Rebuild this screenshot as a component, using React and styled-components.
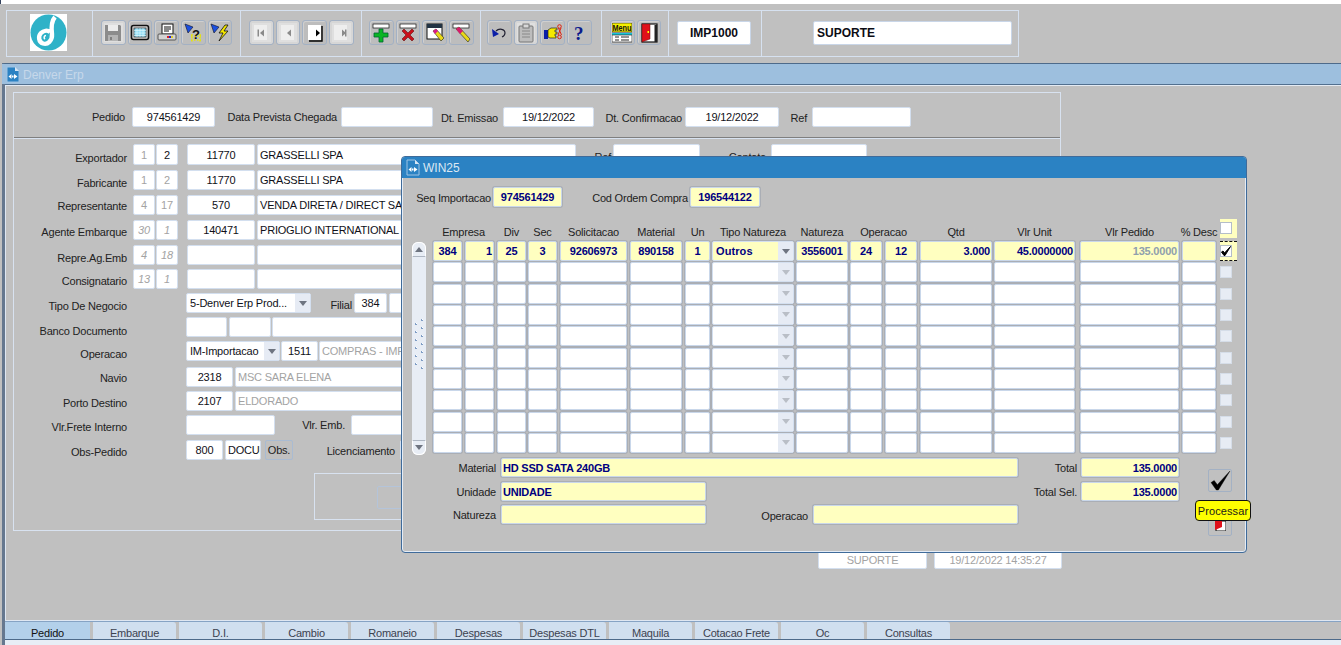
import React from "react";
import styled, { createGlobalStyle } from "styled-components";

const GlobalStyle = createGlobalStyle`
  html, body {
    margin: 0;
    padding: 0;
    background: #c0c0c0;
    overflow: hidden;
  }
  * {
    box-sizing: border-box;
  }
`;

const Page = styled.div`
  position: relative;
  width: 1341px;
  height: 645px;
  display: flex;
  flex-direction: column;
  overflow: hidden;
  background: #c0c0c0;
  color: #1c1c1c;
  font-family: "Liberation Sans", Arial, sans-serif;
  font-size: 11px;
  letter-spacing: -0.2px;
`;

const TopStrip = styled.div`
  height: 4px;
  background: #fff;
  border-left: 1px solid #33415c;
`;

/* toolbar */
const Toolbar = styled.div`
  display: flex;
  width: 1013px;
  height: 47px;
  margin: 6px 0 0 6px;
  border: 1px solid #d6e1f0;
  letter-spacing: 0;
`;

const ToolGroup = styled.div`
  display: flex;
  align-items: center;
  gap: 2.2px;
  width: ${(p) => p.$w}px;
  padding-left: ${(p) => p.$pad}px;
  padding-bottom: 2px;
  border-right: 1px solid #d6e1f0;
  &:last-child {
    border-right: none;
  }
`;

const LogoBox = styled.div`
  width: 37px;
  height: 37px;
  background: #fff;
`;

const ToolButton = styled.div`
  display: flex;
  align-items: center;
  justify-content: center;
  width: 24.5px;
  height: 25px;
  border: 1px solid #a3b1c4;
  border-radius: 3px;
  background: #bdbdbd;
  box-shadow: inset 1px 1px 0 #cfcfcf;
  ${(p) => p.$off && "box-shadow: inset 0 0 0 2px #d6d6d6, inset 0 0 0 6px #dfdfdf;"}
`;

const ToolField = styled.div`
  display: flex;
  align-items: center;
  justify-content: ${(p) => (p.$left ? "flex-start" : "center")};
  width: ${(p) => p.$w}px;
  height: 24px;
  padding: 0 3px;
  background: #fff;
  border: 1px solid #c9d6e8;
  border-radius: 2px;
  color: #0c0c14;
  font-size: 12px;
  font-weight: 700;
`;

/* main window */
const MainWindow = styled.div`
  flex: 1;
  display: flex;
  flex-direction: column;
  min-height: 0;
  margin: 6px 0 0 2px;
  border-top: 1px solid #4d6a8a;
  border-left: 3px solid #66788f;
  box-shadow: inset 1px 0 0 #dfe7f2;
`;

const MainTitle = styled.div`
  display: flex;
  align-items: center;
  gap: 3px;
  height: 20px;
  margin-left: -3px;
  padding: 1px 0 0 4px;
  background: #9dbfde;
  color: #c6d8ea;
  font-size: 12px;
  letter-spacing: 0;
`;

const MainBody = styled.div`
  flex: 1;
  display: flex;
  flex-direction: column;
  min-height: 0;
  padding-top: 7px;
  border-top: 1px solid #52708f;
  box-shadow: inset 0 1px 0 #e4ebf4;
`;

const Frame = styled.div`
  width: 1048px;
  height: 439px;
  margin-left: 8px;
  border: 1px solid #d8e2f0;
`;

const HeaderRow = styled.div`
  display: flex;
  height: 45px;
  padding: 14px 0 10px;
  border-bottom: 1px solid #7f7f7f;
  box-shadow: 0 1px 0 #d8e2f0;
`;

const FormRow = styled.div`
  display: flex;
  height: ${(p) => p.$h || 20}px;
  margin-top: ${(p) => p.$mt}px;
`;

const Label = styled.div`
  flex: none;
  display: flex;
  align-items: center;
  justify-content: flex-end;
  width: ${(p) => p.$w}px;
  height: 100%;
  margin-left: ${(p) => p.$ml || 0}px;
  padding-top: ${(p) => p.$dy ?? 4}px;
  color: #222;
  font-size: 11px;
  white-space: nowrap;
`;

const Field = styled.div`
  flex: none;
  display: flex;
  align-items: center;
  justify-content: ${(p) =>
    p.$align === "center" ? "center" : p.$align === "right" ? "flex-end" : "flex-start"};
  width: ${(p) => p.$w}px;
  height: 100%;
  margin-left: ${(p) => p.$ml || 0}px;
  padding: 0 2px;
  overflow: hidden;
  background: #fff;
  border: 1px solid #d3dfef;
  border-radius: 2px;
  color: ${(p) => (p.$muted ? "#a3a3a3" : "#101018")};
  font-size: 11px;
  font-style: ${(p) => (p.$slant ? "italic" : "normal")};
  white-space: nowrap;
`;

const ObsButton = styled.div`
  display: flex;
  align-items: center;
  justify-content: center;
  width: 28px;
  height: 100%;
  margin-left: 4px;
  border: 1px solid #a9bbd2;
  border-radius: 2px;
  color: #222;
`;

const Combo = styled.div`
  flex: none;
  display: flex;
  align-items: stretch;
  width: ${(p) => p.$w}px;
  height: 100%;
  margin-left: ${(p) => p.$ml || 0}px;
  overflow: hidden;
  background: ${(p) => (p.$yellow ? "#ffffc0" : "#fff")};
  border: 1px solid #d3dfef;
  border-radius: 2px;
  ${(p) => p.$grid && "box-shadow: 0 0 0 1px #aaaeb5;"}
  color: ${(p) => (p.$yellow ? "#000080" : "#101018")};
  font-weight: ${(p) => (p.$yellow ? 700 : 400)};
  letter-spacing: ${(p) => (p.$yellow ? "0.1px" : "-0.2px")};
`;

const ComboText = styled.div`
  flex: 1;
  display: flex;
  align-items: center;
  padding-left: 3px;
  overflow: hidden;
  white-space: nowrap;
`;

const ComboArrow = styled.div`
  flex: none;
  display: flex;
  align-items: center;
  justify-content: center;
  width: 15px;
  background: #e6ebf4;
  &::after {
    content: "";
    border-left: 4px solid transparent;
    border-right: 4px solid transparent;
    border-top: 5px solid ${(p) => (p.$faded ? "#b9bec6" : "#6e7480")};
  }
`;

const LowerBox = styled.div`
  width: 500px;
  height: 47px;
  margin: 13px 0 0 300px;
  padding: 12px 0 0 62px;
  border: 1px solid #d8e2f0;
`;

const GhostButton = styled.div`
  width: 120px;
  height: 23px;
  border: 1px solid #b4c4da;
  border-radius: 2px;
`;

const StatusRow = styled.div`
  display: flex;
  gap: 7px;
  height: 19px;
  margin: 19px 0 0 813px;
`;

/* tabs */
const TabBar = styled.div`
  display: flex;
  margin-top: auto;
  height: 25px;
  padding-top: 2px;
  background: linear-gradient(#dfe7f2 0 1px, #86a3c4 1px 2px, #c0c0c0 2px);
  border-bottom: 5px solid #e8eef6;
  box-shadow: inset 0 -1px 0 #4d6a8a;
`;

const Tab = styled.div`
  display: flex;
  align-items: flex-end;
  justify-content: center;
  width: ${(p) => (p.$active ? 85 : 83)}px;
  height: 17px;
  margin-right: 3px;
  background: ${(p) => (p.$active ? "#b3d0ea" : "#d0dfef")};
  border-top-right-radius: ${(p) => (p.$active ? "0" : "3px")};
  color: ${(p) => (p.$active ? "#111" : "#3c4250")};
  font-size: 11px;
`;

/* WIN25 dialog */
const Dialog = styled.div`
  position: absolute;
  left: 401px;
  top: 156px;
  display: flex;
  flex-direction: column;
  width: 846px;
  height: 397px;
  background: #c0c0c0;
  border: 1px solid #3f6b9a;
  border-radius: 4px;
  box-shadow: inset 0 0 0 1px #e4ecf6;
`;

const DialogTitle = styled.div`
  display: flex;
  align-items: center;
  gap: 3px;
  height: 21px;
  padding-left: 4px;
  background: #2b82c3;
  border-radius: 3px 3px 0 0;
  color: #dce8f3;
  font-size: 12px;
  letter-spacing: 0;
`;

const DialogBody = styled.div`
  flex: 1;
  padding: 9px 0 0 10px;
`;

const SeqRow = styled.div`
  display: flex;
  height: 20px;
`;

const YellowField = styled.div`
  flex: none;
  display: flex;
  align-items: center;
  justify-content: ${(p) =>
    p.$align === "center" ? "center" : p.$align === "right" ? "flex-end" : "flex-start"};
  width: ${(p) => p.$w}px;
  height: ${(p) => p.$h || "100%"};
  margin-left: ${(p) => p.$ml || 0}px;
  padding: 0 1px;
  overflow: hidden;
  background: ${(p) => (p.$blank ? "#fff" : "#ffffc0")};
  border: 1px solid #c9d7ea;
  border-radius: 2px;
  box-shadow: 0 0 0 1px #aaaeb5;
  color: ${(p) => (p.$muted ? "#8fa0ad" : "#000080")};
  font-size: 11px;
  font-weight: 700;
  white-space: nowrap;
`;

const TableArea = styled.div`
  display: flex;
  margin-top: 12px;
`;

const ScrollBar = styled.div`
  display: flex;
  flex-direction: column;
  justify-content: space-between;
  align-items: stretch;
  width: 14px;
  height: 213px;
  margin: 23px 7px 0 0;
  background: #e8edf5;
  border-radius: 6px;
`;

const ScrollEnd = styled.div`
  display: flex;
  align-items: center;
  justify-content: center;
  height: 15px;
  background: #e8edf5;
  border: 1px solid #fff;
  border-radius: ${(p) => (p.$down ? "0 0 6px 6px" : "6px 6px 0 0")};
  ${(p) => (p.$down ? "border-top: 1px solid #aeb6c2;" : "border-bottom: 1px solid #aeb6c2;")}
  &::after {
    content: "";
    border-left: 4px solid transparent;
    border-right: 4px solid transparent;
    ${(p) => (p.$down ? "border-top: 5px solid #6e7480;" : "border-bottom: 5px solid #6e7480;")}
  }
`;

const ScrollGrip = styled.svg`
  margin-bottom: 4px;
`;

const COL_PITCH = [32, 32, 31, 32, 70, 55, 27, 84, 54, 35, 35, 74, 86, 102, 38, 18];
const COL_WIDTH = [29, 29, 29, 29, 67, 52, 25, 82, 52, 32, 32, 72, 81, 99, 34, 17];

const Table = styled.div`
  display: grid;
  grid-template-columns: ${COL_PITCH.map((n) => `${n}px`).join(" ")};
  grid-template-rows: 22px repeat(10, 21.33px);
`;

const HeadCell = styled.div`
  grid-column: span ${(p) => p.$span || 1};
  display: flex;
  align-items: center;
  justify-content: center;
  width: ${(p) => p.$w}px;
  height: 22px;
  padding-top: 4px;
  color: #222;
  white-space: nowrap;
`;

const Cell = styled.div`
  height: 20px;
`;

const CheckCell = styled.div`
  display: flex;
  align-items: ${(p) => (p.$head ? "flex-start" : "center")};
  width: 17px;
  height: ${(p) => (p.$head ? 19 : 20)}px;
  padding-top: ${(p) => (p.$head ? 3 : 0)}px;
  background: ${(p) => (p.$yellow ? "#ffffc0" : "transparent")};
  ${(p) => p.$focus && "border-top: 1px dashed #111; border-bottom: 1px dashed #111;"}
`;

const CheckBox = styled.div`
  display: flex;
  align-items: center;
  justify-content: center;
  width: 12px;
  height: 12px;
  background: ${(p) => (p.$off ? "#e7ecf4" : "#fff")};
  border: 1px solid ${(p) => (p.$off ? "#d5dde8" : "#b4bdc9")};
`;

const BottomArea = styled.div`
  display: flex;
  margin-top: 3px;
`;

const BottomFields = styled.div`
  display: flex;
  flex-direction: column;
  gap: 5px;
  width: 767px;
`;

const BottomRow = styled.div`
  display: flex;
  height: 19px;
  margin-top: ${(p) => p.$mt || 0}px;
`;

const ActionColumn = styled.div`
  position: relative;
  display: flex;
  flex-direction: column;
  gap: 21px;
  margin-left: 29px;
  padding-top: 11px;
`;

const ActionButton = styled.div`
  display: flex;
  align-items: ${(p) => (p.$low ? "flex-end" : "center")};
  justify-content: center;
  width: 24px;
  height: 23px;
  padding-bottom: ${(p) => (p.$low ? 4 : 0)}px;
  border: 1px solid #a3b1c4;
  border-radius: 2px;
`;

const Tooltip = styled.div`
  position: absolute;
  left: -13px;
  top: 42px;
  display: flex;
  align-items: center;
  justify-content: center;
  width: 56px;
  height: 21px;
  background: #ffff00;
  border: 1px solid #111;
  border-radius: 4px;
  color: #1a1a1a;
  font-size: 11px;
  letter-spacing: 0.1px;
`;

/* drawings */
function DocIcon({ fill }) {
  return (
    <svg width="14" height="17" viewBox="0 0 14 17">
      <path d="M1 1h8l4 4v11H1z" fill={fill} stroke="#9fc3e3" strokeWidth="1" />
      <path d="M9 1v4h4z" fill="#d7e6f4" />
      <path d="M5.5 8 2.5 10.5 5.5 13z" fill="#fff" />
      <rect x="6" y="9.5" width="1.5" height="2" fill="#fff" />
      <path d="M8 8l3.5 2.5L8 13z" fill="#fff" />
    </svg>
  );
}

function Logo() {
  return (
    <svg width="37" height="37" viewBox="0 0 37 37">
      <circle cx="18.5" cy="18.5" r="18" fill="#2fb2c8" />
      <path
        d="M25 3 C21.5 7 21 12 22 20 C22.5 27 17.5 31 13 29.5 C8.5 28 8 22 11 19 C13.5 16.5 17.5 16 20 18"
        fill="none"
        stroke="#fff"
        strokeWidth="4.4"
      />
      <path d="M15 25 C13.5 24 14 21.5 16 21.5" fill="none" stroke="#fff" strokeWidth="1.6" />
    </svg>
  );
}

const icons = {
  save: (
    <>
      <path d="M2 2h15l1 1v15H2z" fill="#8c8c8c" />
      <rect x="5" y="2" width="10" height="6" fill="#ececec" />
      <rect x="5" y="12" width="10" height="6" fill="#b4b4b4" />
      <rect x="7" y="14" width="2" height="3" fill="#808080" />
    </>
  ),
  screen: (
    <>
      <rect x="1.5" y="2.5" width="17" height="14" rx="2" fill="#d8d8d8" stroke="#111" strokeWidth="1.6" />
      <rect x="4" y="5" width="12" height="9" fill="#8fdcf5" stroke="#222" strokeWidth="0.7" />
      <path d="M4 7.5h12M4 10h12M4 12.5h12M7 5v9M10 5v9M13 5v9" stroke="#e8fbff" strokeWidth="0.6" />
    </>
  ),
  print: (
    <>
      <rect x="5" y="1" width="11" height="10" fill="#fff" stroke="#111" />
      <path d="M7 4h7M7 6h7M7 8h5" stroke="#111" />
      <rect x="1" y="11" width="18" height="6" rx="1" fill="#d4d4d4" stroke="#555" />
      <rect x="10" y="13" width="2" height="2" fill="#d22" />
      <rect x="12" y="13" width="2" height="2" fill="#22c" />
      <rect x="14" y="13" width="2" height="2" fill="#dc2" />
    </>
  ),
  ask: (
    <>
      <path d="M2 1l8 3-5 6z" fill="#1a4fe0" stroke="#112" strokeWidth="0.6" />
      <path d="M8 13h10M8 17h10M9 11v8M17 11v8" stroke="#e8e800" strokeWidth="1.4" strokeDasharray="1.5 1.5" />
      <text x="9" y="16" fontFamily="Liberation Sans" fontSize="13" fontWeight="700" fill="#111">?</text>
    </>
  ),
  run: (
    <>
      <path d="M1 1l8 3-5 6z" fill="#1a4fe0" stroke="#112" strokeWidth="0.6" />
      <path d="M15 2l-6 8h4l-4 8 9-10h-4l4-6z" fill="#f5e800" stroke="#111" strokeWidth="0.8" />
    </>
  ),
  plus: (
    <>
      <rect x="2" y="1" width="16" height="4" fill="#fff" stroke="#111" strokeWidth="0.7" />
      <path d="M8 6h4v4h5v4h-5v5H8v-5H3v-4h5z" fill="#0bb524" stroke="#063" strokeWidth="0.8" />
    </>
  ),
  cross: (
    <>
      <rect x="2" y="1" width="16" height="4" fill="#fff" stroke="#111" strokeWidth="0.7" />
      <path d="M4 8l2-2 4 4 4-4 2 2-4 4 4 4-2 2-4-4-4 4-2-2 4-4z" fill="#c9101a" stroke="#611" strokeWidth="0.6" />
    </>
  ),
  editWin: (
    <>
      <rect x="2" y="1" width="15" height="15" fill="#fff" stroke="#111" />
      <rect x="2" y="1" width="15" height="4" fill="#234" />
      <path d="M8 8l3-2 8 9-3 3z" fill="#e8d81a" stroke="#222" strokeWidth="0.6" />
      <path d="M8 8l3-2 2 2-3 3z" fill="#d81a8c" />
    </>
  ),
  pencil: (
    <>
      <rect x="2" y="1" width="16" height="4" fill="#fff" stroke="#111" strokeWidth="0.7" />
      <path d="M5 6l3-2 11 12-2 3z" fill="#e8d81a" stroke="#222" strokeWidth="0.6" />
      <path d="M5 6l3-2 4 4-3 3z" fill="#d81a6c" />
    </>
  ),
  undo: (
    <>
      <path d="M7 8c3-3 9-2 9 2 0 2-1 3-3 4" fill="none" stroke="#223" strokeWidth="1.2" />
      <path d="M3 6l1 8 6-3z" fill="#0b1fa8" />
    </>
  ),
  clip: (
    <>
      <rect x="3" y="3" width="14" height="16" rx="1" fill="#bdbdbd" stroke="#777" />
      <rect x="7" y="1" width="6" height="4" fill="#d8d8d8" stroke="#777" />
      <path d="M6 8h8M6 11h8M6 14h8" stroke="#888" />
    </>
  ),
  hand: (
    <>
      <rect x="1" y="7" width="4" height="9" fill="#0b1fa8" />
      <path d="M5 7l3-2h6v2h-2v2h2v2h-2v2h1v2H7l-2-1z" fill="#f5e800" stroke="#222" strokeWidth="0.7" />
      <circle cx="16.5" cy="3.5" r="1.8" fill="none" stroke="#d21" />
      <circle cx="16.5" cy="14" r="1.8" fill="none" stroke="#d21" />
      <path d="M15.5 5l3 7M18 5l-3 7" stroke="#d21" />
    </>
  ),
  help: (
    <text x="5" y="17" fontFamily="Liberation Serif" fontSize="19" fontWeight="700" fill="#0b1a8c">?</text>
  ),
  menu: (
    <>
      <rect x="0" y="0" width="20" height="9" fill="#f5f000" stroke="#111" strokeWidth="0.6" />
      <text x="0.5" y="8" fontFamily="Liberation Sans" fontSize="8.5" fontWeight="700" fill="#111" textLength="19" lengthAdjust="spacingAndGlyphs">Menu</text>
      <rect x="0" y="10" width="20" height="2" fill="#18c5d8" />
      <rect x="0" y="12" width="20" height="7" fill="#fff" stroke="#111" strokeWidth="0.6" />
      <path d="M3 14h4M9 14h8M3 17h4M9 17h8" stroke="#111" strokeWidth="0.9" />
    </>
  ),
  door: (
    <>
      <rect x="3" y="1" width="15" height="18" fill="#fff" stroke="#111" strokeWidth="1.2" />
      <rect x="15.5" y="2" width="2.5" height="17" fill="#222" />
      <path d="M3 1h8v15l-8 3z" fill="#e0101a" stroke="#611" strokeWidth="0.5" />
      <rect x="8.5" y="8" width="1.5" height="2" fill="#ff0" />
    </>
  ),
};

function Glyph({ name }) {
  return (
    <svg width="20" height="20" viewBox="0 0 20 20">
      {icons[name]}
    </svg>
  );
}

function NavGlyph({ dir, bar, off }) {
  const tone = off ? "#8a8a8a" : "#000";
  const tri = dir === "left" ? "M11 5.5v7l-4-3.5z" : "M9 5.5v7l4-3.5z";
  return (
    <svg width="16" height="18" viewBox="0 0 16 18">
      {!off && <path d="M15 2v15H2" fill="none" stroke="#000" strokeWidth="1.4" />}
      <rect x="1" y="1" width="13" height="15" fill={off ? "#eeeeee" : "#fff"} />
      <path d={tri} fill={tone} />
      {bar && <rect x={dir === "left" ? 4.5 : 12} y="5.5" width="1.5" height="7" fill={tone} />}
    </svg>
  );
}

function CheckMark({ size, heavy }) {
  return (
    <svg width={size} height={size} viewBox="0 0 20 20">
      <path
        d="M1 12l3-2 3 4L19 1 8 19H6z"
        fill="#000"
        stroke="#000"
        strokeWidth={heavy ? 2 : 0.4}
      />
    </svg>
  );
}

const GRID_ROWS = [
  ["384", "1", "25", "3", "92606973", "890158", "1", "Outros", "3556001", "24", "12", "3.000", "45.0000000", "135.0000", ""],
  ...Array.from({ length: 9 }, () => Array(15).fill("")),
];

const HEADERS = [
  ["Empresa", 2],
  ["Div", 1],
  ["Sec", 1],
  ["Solicitacao", 1],
  ["Material", 1],
  ["Un", 1],
  ["Tipo Natureza", 1],
  ["Natureza", 1],
  ["Operacao", 2],
  ["Qtd", 1],
  ["Vlr Unit", 1],
  ["Vlr Pedido", 1],
  ["% Desc", 1],
];

const TABS = ["Embarque", "D.I.", "Cambio", "Romaneio", "Despesas", "Despesas DTL", "Maquila", "Cotacao Frete", "Oc", "Consultas"];

function headWidth(start, span) {
  const pitch = COL_PITCH.slice(start, start + span - 1).reduce((a, b) => a + b, 0);
  return pitch + COL_WIDTH[start + span - 1];
}

function cellAlign(c) {
  return c === 1 || c > 10 ? "right" : "center";
}

function SmallPair({ a, b, slantA, slantB, darkB }) {
  return (
    <>
      <Field $w={22} $ml={6} $align="center" $muted $slant={slantA}>{a}</Field>
      <Field $w={22} $ml={1} $align="center" $muted={!darkB} $slant={slantB}>{b}</Field>
    </>
  );
}

export default function App() {
  let col = 0;
  return (
    <Page>
      <GlobalStyle />
      <TopStrip />
      <Toolbar>
        <ToolGroup $w={86} $pad={23}>
          <LogoBox><Logo /></LogoBox>
        </ToolGroup>
        <ToolGroup $w={148} $pad={8}>
          {["save", "screen", "print", "ask", "run"].map((n) => (
            <ToolButton key={n} $off={n === "save"}><Glyph name={n} /></ToolButton>
          ))}
        </ToolGroup>
        <ToolGroup $w={121} $pad={8}>
          <ToolButton $off><NavGlyph dir="left" bar off /></ToolButton>
          <ToolButton $off><NavGlyph dir="left" off /></ToolButton>
          <ToolButton><NavGlyph dir="right" /></ToolButton>
          <ToolButton $off><NavGlyph dir="right" bar off /></ToolButton>
        </ToolGroup>
        <ToolGroup $w={119} $pad={7}>
          {["plus", "cross", "editWin", "pencil"].map((n) => (
            <ToolButton key={n}><Glyph name={n} /></ToolButton>
          ))}
        </ToolGroup>
        <ToolGroup $w={121} $pad={6}>
          {["undo", "clip", "hand", "help"].map((n) => (
            <ToolButton key={n} $off={n === "clip"}><Glyph name={n} /></ToolButton>
          ))}
        </ToolGroup>
        <ToolGroup $w={67} $pad={8}>
          <ToolButton><Glyph name="menu" /></ToolButton>
          <ToolButton><Glyph name="door" /></ToolButton>
        </ToolGroup>
        <ToolGroup $w={93} $pad={8}>
          <ToolField $w={74}>IMP1000</ToolField>
        </ToolGroup>
        <ToolGroup $w={255} $pad={51}>
          <ToolField $w={199} $left>SUPORTE</ToolField>
        </ToolGroup>
      </Toolbar>

      <MainWindow>
        <MainTitle>
          <DocIcon fill="#2b82c3" />
          Denver Erp
        </MainTitle>
        <MainBody>
          <Frame>
            <HeaderRow>
              <Label $w={111} $dy={0}>Pedido</Label>
              <Field $w={83} $ml={7} $align="center">974561429</Field>
              <Label $w={110} $ml={12} $dy={0}>Data Prevista Chegada</Label>
              <Field $w={92} $ml={4} />
              <Label $w={56} $ml={9} $dy={2}>Dt. Emissao</Label>
              <Field $w={91} $ml={5} $align="center">19/12/2022</Field>
              <Label $w={77} $ml={11} $dy={2}>Dt. Confirmacao</Label>
              <Field $w={94} $ml={3} $align="center">19/12/2022</Field>
              <Label $w={17} $ml={11} $dy={2}>Ref</Label>
              <Field $w={99} $ml={5} />
            </HeaderRow>

            <FormRow $mt={6} $h={21}>
              <Label $w={113} $dy={7}>Exportador</Label>
              <SmallPair a="1" b="2" darkB />
              <Field $w={68} $ml={9} $align="center">11770</Field>
              <Field $w={319} $ml={2}>GRASSELLI SPA</Field>
              <Label $w={18} $ml={17} $dy={4}>Ref</Label>
              <Field $w={87} $ml={2} />
              <Label $w={36} $ml={30} $dy={4}>Contato</Label>
              <Field $w={96} $ml={5} />
            </FormRow>
            <FormRow $mt={5}>
              <Label $w={113} $dy={6}>Fabricante</Label>
              <SmallPair a="1" b="2" />
              <Field $w={68} $ml={9} $align="center">11770</Field>
              <Field $w={319} $ml={2}>GRASSELLI SPA</Field>
            </FormRow>
            <FormRow $mt={5}>
              <Label $w={113} $dy={2}>Representante</Label>
              <SmallPair a="4" b="17" />
              <Field $w={68} $ml={9} $align="center">570</Field>
              <Field $w={319} $ml={2}>VENDA DIRETA / DIRECT SALES</Field>
            </FormRow>
            <FormRow $mt={5}>
              <Label $w={113} $dy={3}>Agente Embarque</Label>
              <SmallPair a="30" b="1" slantA slantB />
              <Field $w={68} $ml={9} $align="center">140471</Field>
              <Field $w={319} $ml={2}>PRIOGLIO INTERNATIONAL SPA</Field>
            </FormRow>
            <FormRow $mt={5}>
              <Label $w={113} $dy={5}>Repre.Ag.Emb</Label>
              <SmallPair a="4" b="18" slantA slantB />
              <Field $w={68} $ml={9} />
              <Field $w={319} $ml={2} />
            </FormRow>
            <FormRow $mt={4}>
              <Label $w={113} $dy={3}>Consignatario</Label>
              <SmallPair a="13" b="1" slantA slantB />
              <Field $w={68} $ml={9} />
              <Field $w={319} $ml={2} />
            </FormRow>
            <FormRow $mt={4}>
              <Label $w={113} $dy={6}>Tipo De Negocio</Label>
              <Combo $w={125} $ml={59}>
                <ComboText>5-Denver Erp Prod...</ComboText>
                <ComboArrow />
              </Combo>
              <Label $w={21} $ml={20} $dy={4}>Filial</Label>
              <Field $w={33} $ml={2} $align="center">384</Field>
              <Field $w={60} $ml={2} />
            </FormRow>
            <FormRow $mt={4}>
              <Label $w={113} $dy={8}>Banco Documento</Label>
              <Field $w={41} $ml={59} />
              <Field $w={42} $ml={2} />
              <Field $w={200} $ml={1} />
            </FormRow>
            <FormRow $mt={4}>
              <Label $w={113} $dy={6}>Operacao</Label>
              <Combo $w={94} $ml={59}>
                <ComboText>IM-Importacao</ComboText>
                <ComboArrow />
              </Combo>
              <Field $w={37} $ml={1} $align="center">1511</Field>
              <Field $w={200} $ml={1} $muted>COMPRAS - IMPORTACAO</Field>
            </FormRow>
            <FormRow $mt={6}>
              <Label $w={113} $dy={1}>Navio</Label>
              <Field $w={47} $ml={59} $align="center">2318</Field>
              <Field $w={300} $ml={2} $muted>MSC SARA ELENA</Field>
            </FormRow>
            <FormRow $mt={4}>
              <Label $w={113} $dy={4}>Porto Destino</Label>
              <Field $w={47} $ml={59} $align="center">2107</Field>
              <Field $w={300} $ml={2} $muted>ELDORADO</Field>
            </FormRow>
            <FormRow $mt={4}>
              <Label $w={113} $dy={4}>Vlr.Frete Interno</Label>
              <Field $w={89} $ml={59} />
              <Label $w={43} $ml={27} $dy={0}>Vlr. Emb.</Label>
              <Field $w={100} $ml={6} />
            </FormRow>
            <FormRow $mt={5}>
              <Label $w={113} $dy={3}>Obs-Pedido</Label>
              <Field $w={37} $ml={59} $align="center">800</Field>
              <Field $w={36} $ml={2}>DOCUM</Field>
              <ObsButton>Obs.</ObsButton>
              <Label $w={69} $ml={33} $dy={1}>Licenciamento</Label>
              <Field $w={60} $ml={5} />
            </FormRow>
            <LowerBox>
              <GhostButton />
            </LowerBox>
          </Frame>

          <StatusRow>
            <Field $w={109} $align="center" $muted>SUPORTE</Field>
            <Field $w={128} $align="center" $muted>19/12/2022 14:35:27</Field>
          </StatusRow>

          <TabBar>
            <Tab $active>Pedido</Tab>
            {TABS.map((t) => (
              <Tab key={t}>{t}</Tab>
            ))}
          </TabBar>
        </MainBody>
      </MainWindow>

      <Dialog>
        <DialogTitle>
          <DocIcon fill="#2b82c3" />
          WIN25
        </DialogTitle>
        <DialogBody>
          <SeqRow>
            <Label $w={79} $dy={1}>Seq Importacao</Label>
            <YellowField $w={69} $ml={2} $align="center">974561429</YellowField>
            <Label $w={94} $ml={32} $dy={1}>Cod Ordem Compra</Label>
            <YellowField $w={70} $ml={2} $align="center">196544122</YellowField>
          </SeqRow>

          <TableArea>
            <ScrollBar>
              <ScrollEnd />
              <ScrollGrip width="14" height="56" viewBox="0 0 14 56">
                {[0, 8, 16, 24, 32, 40, 48].map((y) => (
                  <g key={y}>
                    <rect x="9" y={y} width="2" height="2" fill="#7e9cc4" />
                    <rect x="10" y={y} width="1" height="1" fill="#fff" />
                    {y < 48 && <rect x="3" y={y + 4} width="2" height="2" fill="#7e9cc4" />}
                    {y < 48 && <rect x="4" y={y + 4} width="1" height="1" fill="#fff" />}
                  </g>
                ))}
              </ScrollGrip>
              <ScrollEnd $down />
            </ScrollBar>

            <Table>
              {HEADERS.map(([text, span]) => {
                const start = col;
                col += span;
                return <HeadCell key={text} $span={span} $w={headWidth(start, span)}>{text}</HeadCell>;
              })}
              <CheckCell $head $yellow>
                <CheckBox />
              </CheckCell>

              {GRID_ROWS.flatMap((row, r) => [
                ...row.map((value, c) => (
                  <Cell key={`${r}-${c}`}>
                    {c === 7 ? (
                      <Combo $w={COL_WIDTH[c]} $grid $yellow={r === 0}>
                        <ComboText>{value}</ComboText>
                        <ComboArrow $faded={r > 0} />
                      </Combo>
                    ) : (
                      <YellowField
                        $w={COL_WIDTH[c]}
                        $blank={r > 0}
                        $muted={c === 13}
                        $align={cellAlign(c)}
                      >
                        {value}
                      </YellowField>
                    )}
                  </Cell>
                )),
                <CheckCell key={`check-${r}`} $yellow={r === 0} $focus={r === 0}>
                  <CheckBox $off={r > 0}>{r === 0 && <CheckMark size={10} heavy />}</CheckBox>
                </CheckCell>,
              ])}
            </Table>
          </TableArea>

          <BottomArea>
            <BottomFields>
              <BottomRow>
                <Label $w={84} $dy={0}>Material</Label>
                <YellowField $w={517} $ml={5}>HD SSD SATA 240GB</YellowField>
                <Label $w={23} $ml={36} $dy={0}>Total</Label>
                <YellowField $w={98} $ml={4} $align="right">135.0000</YellowField>
              </BottomRow>
              <BottomRow>
                <Label $w={84} $dy={0}>Unidade</Label>
                <YellowField $w={205} $ml={5}>UNIDADE</YellowField>
                <Label $w={44} $ml={327} $dy={0}>Total Sel.</Label>
                <YellowField $w={98} $ml={4} $align="right">135.0000</YellowField>
              </BottomRow>
              <BottomRow $mt={-1}>
                <Label $w={84} $dy={0}>Natureza</Label>
                <YellowField $w={205} $ml={5} />
                <Label $w={48} $ml={54} $dy={2}>Operacao</Label>
                <YellowField $w={205} $ml={5} />
              </BottomRow>
            </BottomFields>
            <ActionColumn>
              <ActionButton><CheckMark size={21} /></ActionButton>
              <ActionButton $low>
                <svg width="11" height="10" viewBox="0 0 11 10">
                  <rect x="1" y="0" width="10" height="10" fill="#fff" stroke="#111" />
                  <path d="M0 0h7v6L0 9z" fill="#e0101a" />
                </svg>
              </ActionButton>
              <Tooltip>Processar</Tooltip>
            </ActionColumn>
          </BottomArea>
        </DialogBody>
      </Dialog>
    </Page>
  );
}
